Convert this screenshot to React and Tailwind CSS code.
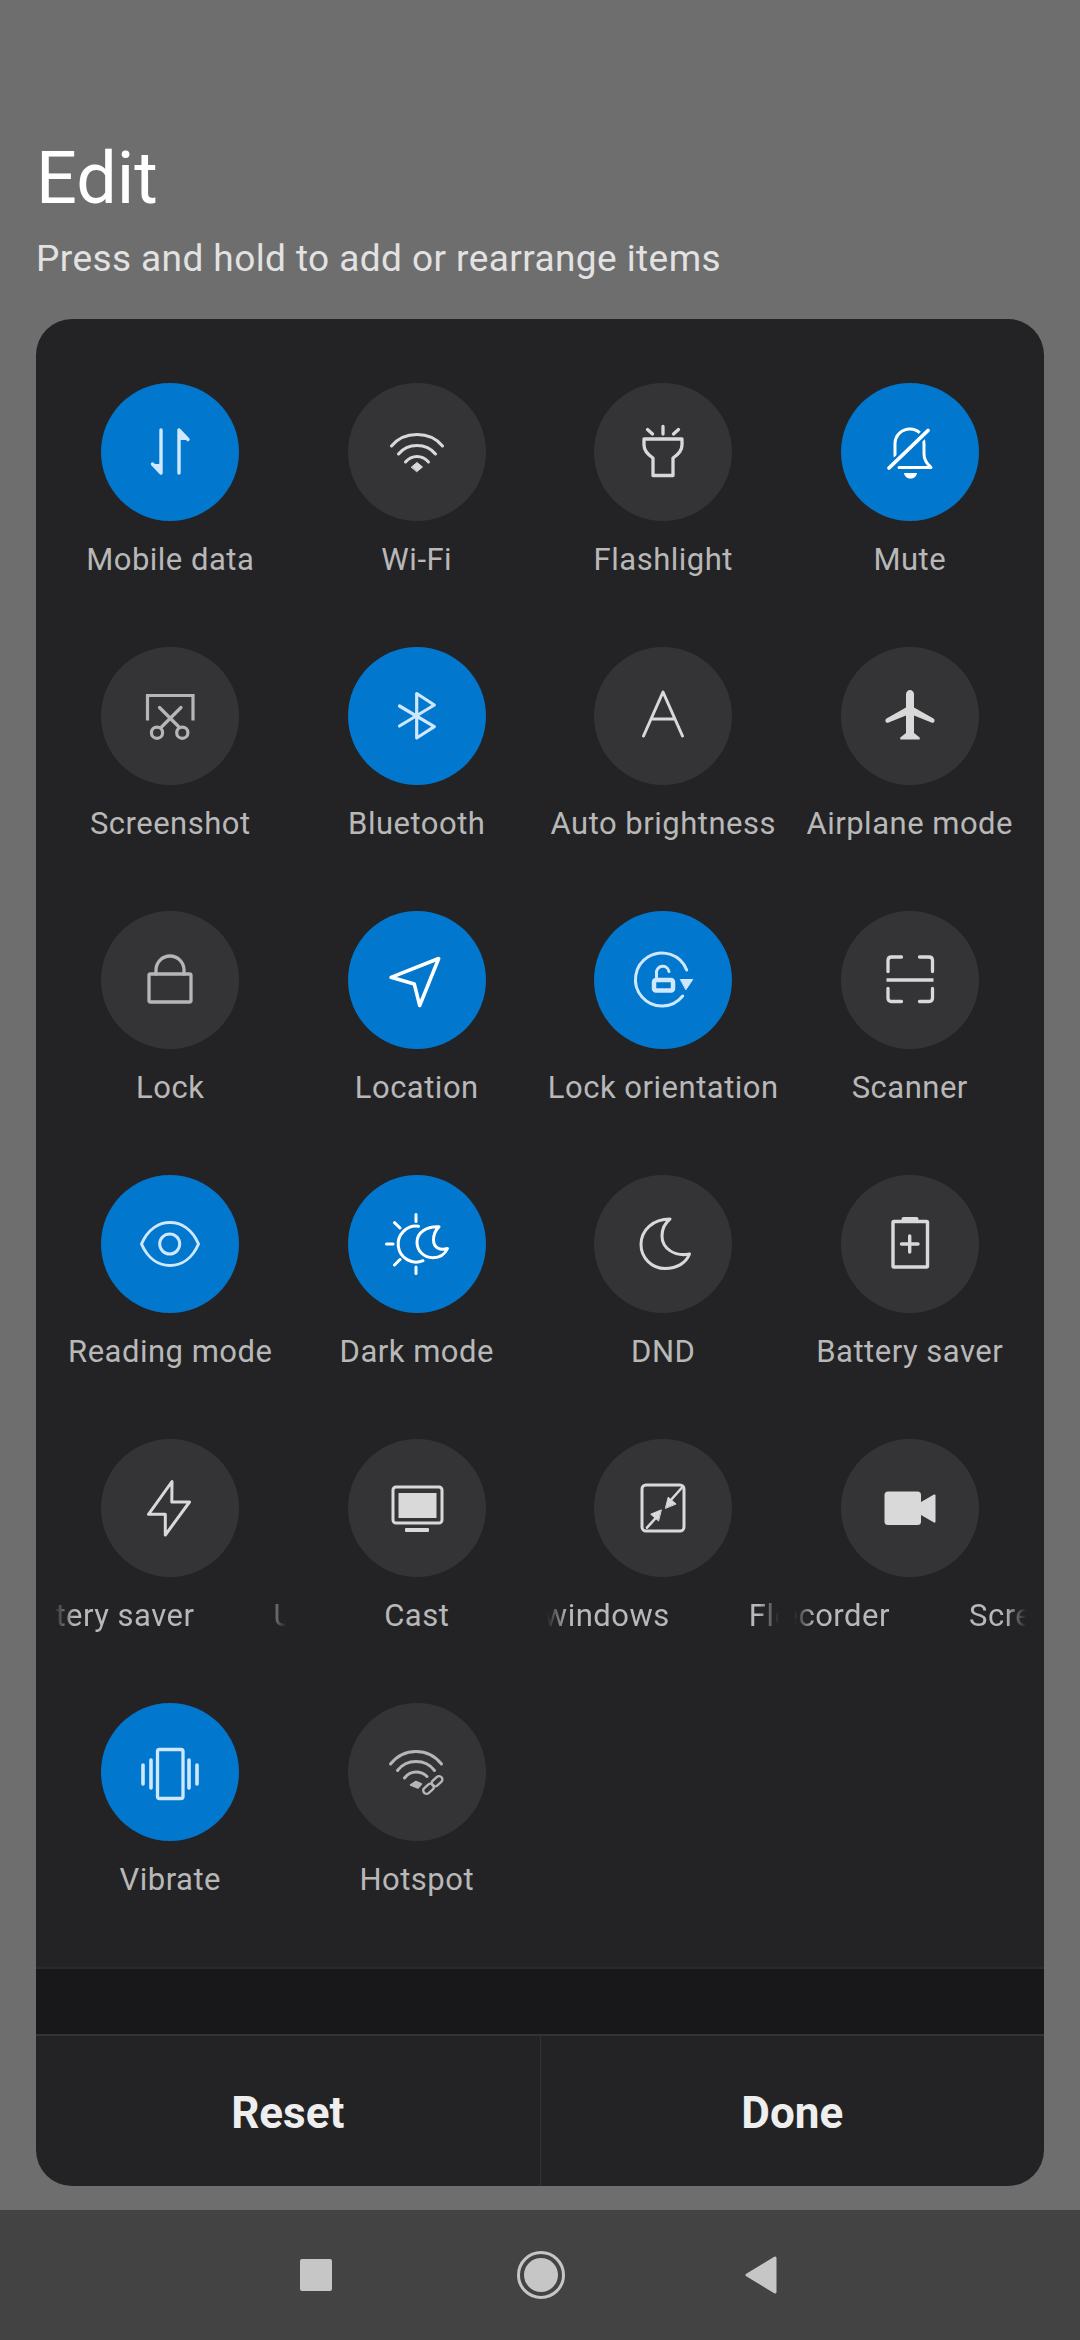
import React from "react";

const LIGHT = "#cfe8ff";
const WHITE = "#ffffff";
const G1 = "#d9d9d9";
const G2 = "#b6b6b6";

function Ico({ c, w = 3.2, children }) {
  return (
    <svg width="138" height="138" viewBox="0 0 138 138" fill="none" stroke={c} strokeWidth={w} strokeLinecap="round" strokeLinejoin="round">
      {children}
    </svg>
  );
}

const icons = {
  data: (
    <Ico c={LIGHT} w={3.4}>
      <path d="M60 91L51 81H60Z" fill={LIGHT} strokeWidth="0" />
      <path d="M60 47V90M60 90L51.5 81" />
      <path d="M78 47L87 57H78Z" fill={LIGHT} strokeWidth="0" />
      <path d="M78 90V47M78 47L87 56.5" />
    </Ico>
  ),
  wifi: (
    <Ico c={G1} w={3}>
      <path d="M43.5 63C50 55 59 51.5 69 51.5C79 51.5 88 55 94.5 63" />
      <path d="M50.5 71C55 65.5 61.5 62.5 69 62.5C76.5 62.5 83 65.5 87.5 71" />
      <path d="M57.5 79C60.5 75.5 64.5 73.5 69 73.5C73.5 73.5 77.5 75.5 80.5 79" />
      <path d="M63.5 84L69 79.5L74.5 84L69 88.5Z" fill={G1} strokeWidth="1" />
    </Ico>
  ),
  flash: (
    <Ico c={G1} w={3.3}>
      <path d="M69 43.5V51M53.5 46.5L58.5 51M84.5 46.5L79.5 51" />
      <path d="M50 56H88V62C88 67 85 71 79 75V92.5H59V75C53 71 50 67 50 62Z" />
    </Ico>
  ),
  mute: (
    <Ico c={WHITE} w={3}>
      <path d="M54 73V61C54 52 61 46 69 46C77 46 83 52 83 61V71C83 77 86 81 90 84.5H58" />
      <path d="M63 90H76C75.5 93.5 73 95.5 69.5 95.5C66 95.5 63.5 93.5 63 90Z" fill={WHITE} strokeWidth="0" />
      <path d="M87 47.5L48 85" stroke="#0277ce" strokeWidth="8" strokeLinecap="butt" />
      <path d="M87 47.5L48 85" strokeWidth="3.8" />
    </Ico>
  ),
  shot: (
    <Ico c={G2} w={3.2}>
      <path d="M46.5 73.5V48.5H92V73.5" strokeLinecap="butt" strokeLinejoin="miter" />
      <path d="M58.5 60.5L78 80M80 60.5L60.5 80" />
      <circle cx="56" cy="85.7" r="5.6" />
      <circle cx="81.3" cy="85.7" r="5.6" />
    </Ico>
  ),
  bt: (
    <Ico c={LIGHT} w={3.2}>
      <path d="M51.5 59L86.3 79.7L68.7 91V46.5L86.3 58L51.5 79" />
    </Ico>
  ),
  auto: (
    <Ico c={G1} w={3}>
      <path d="M49.5 89L69 45L88.5 89M57 72H81" />
    </Ico>
  ),
  plane: (
    <svg width="138" height="138" viewBox="0 0 138 138" fill={G1}>
      <path d="M65 47.5C65 41.5 73 41.5 73 47.5V60.5L92.5 71.5C94.5 73 93.5 76.5 91 75.7L73 68.5V86L78.7 90.5V92.5H59.3V90.5L65 86V68.5L47 75.7C44.5 76.5 43.5 73 45.5 71.5L65 60.5Z" />
    </svg>
  ),
  lock: (
    <Ico c={G2} w={3.3}>
      <rect x="48" y="63" width="42" height="28" rx="1.5" />
      <path d="M55 63V59A14 14 0 0 1 83 59V63" />
    </Ico>
  ),
  loc: (
    <Ico c={WHITE} w={3.5}>
      <path d="M90.7 47.5L43 66.3L66.3 73L71.7 94.5Z" />
    </Ico>
  ),
  orient: (
    <Ico c={LIGHT} w={3}>
      <path d="M88.7 85A26.5 26.5 0 1 1 92.7 59" />
      <path d="M86.7 68.5H98.7L92 78.5Z" fill={LIGHT} strokeWidth="1" />
      <rect x="60" y="69" width="19" height="10.5" rx="2" strokeWidth="4.5" />
      <path d="M62.5 66V62.5A6.3 6.3 0 0 1 75 60.5" strokeWidth="3" />
    </Ico>
  ),
  scan: (
    <Ico c={G1} w={3.3}>
      <path d="M47 60.5V49.5Q47 46 50.5 46H60.5M78.5 46H88Q91.5 46 91.5 49.5V60.5M47 77.5V87Q47 90.5 50.5 90.5H60.5M78.5 90.5H88Q91.5 90.5 91.5 87V77.5" />
      <path d="M45.5 69H92.5" strokeLinecap="butt" />
    </Ico>
  ),
  eye: (
    <Ico c={LIGHT} w={3}>
      <path d="M40.5 69C47 54 58 47.5 69 47.5C80 47.5 91 54 97.5 69C91 84 80 90.5 69 90.5C58 90.5 47 84 40.5 69Z" />
      <circle cx="68.7" cy="69" r="10" />
    </Ico>
  ),
  dark: (
    <Ico c={WHITE} w={3}>
      <path d="M70.5 51.2A18 18 0 1 0 75 85.7" />
      <path d="M68 39.5V46.5M68 92V98.5M38.5 69H45M46.5 47.7L52 53M46.5 90L52 84.5" />
      <path d="M91 51.8C79 51 69 57.5 69 67C69 76 76 82.7 85 82.7C91.5 82.7 97 79 99.5 73.5C92 76 85.5 72.5 85.5 65C85.5 60 87.5 55 91 51.8Z" />
    </Ico>
  ),
  dnd: (
    <Ico c={G1} w={3}>
      <path d="M76 44C59 44 47 55 47 69.5C47 83 58 93.5 71 93.5C83 93.5 92 88 95.5 79C80 82 68 73 68 61C68 54 71 48 76 44Z" />
    </Ico>
  ),
  batt: (
    <Ico c={G1} w={3.4}>
      <rect x="52" y="46.5" width="34.5" height="45.5" rx="1" />
      <path d="M62.5 44H75.5" strokeWidth="4" />
      <path d="M68.7 61V77M60.5 69H77" />
    </Ico>
  ),
  bolt: (
    <Ico c={G1} w={3}>
      <path d="M71 42.5L47.5 75.3H64.3V96L88.5 63H70.8Z" />
    </Ico>
  ),
  cast: (
    <Ico c={G1} w={3}>
      <rect x="45" y="48" width="49" height="36" rx="3" />
      <rect x="50.5" y="54" width="38" height="25" fill={G1} strokeWidth="0" />
      <rect x="57" y="89" width="24" height="4" rx="1" fill={G1} strokeWidth="0" />
    </Ico>
  ),
  float: (
    <Ico c={G1} w={3}>
      <rect x="48" y="46" width="42" height="46" rx="4" />
      <path d="M88.5 48L76 62M53 88.7L63.5 77" strokeWidth="2.6" />
      <path d="M71.5 69L74.2 58.2L81.8 64.8Z" fill={G1} strokeWidth="1" />
      <path d="M67 71L56.7 75.2L64.3 81.8Z" fill={G1} strokeWidth="1" />
    </Ico>
  ),
  cam: (
    <svg width="138" height="138" viewBox="0 0 138 138" fill={G1}>
      <rect x="43.5" y="52.5" width="36.5" height="33.5" rx="3.5" />
      <path d="M80 63L93 55.5Q94.5 55 94.5 56.5V82.5Q94.5 84 93 83.5L80 76Z" />
    </svg>
  ),
  vib: (
    <Ico c={LIGHT} w={3.3}>
      <rect x="56.5" y="46.5" width="25.5" height="49" rx="2" />
      <path d="M50 57V85M42 62V81M88 57V85M96 62V81" strokeWidth="3.6" />
    </Ico>
  ),
  hot: (
    <Ico c={G2} w={3}>
      <path d="M42.5 61C49 53 58 48.5 68 48.5C78 48.5 87 53 93.5 61" />
      <path d="M49.5 67.5C54 61.5 60.5 58.5 68 58.5C75.5 58.5 82 61.5 86.5 67.5" />
      <path d="M56.5 75C59.5 71 63.5 69 68 69C72 69 76 70.5 79 73.5" />
      <path d="M62.5 82L68 78.5L73.5 81L70 85Z" fill={G2} strokeWidth="1.5" />
      <g strokeWidth="2.4">
        <rect x="74.5" y="82.5" width="12" height="6.5" rx="3.2" transform="rotate(-42 80.5 85.7)" />
        <rect x="83" y="75" width="12" height="6.5" rx="3.2" transform="rotate(-42 89 78.2)" />
      </g>
    </Ico>
  ),
};

function Cell({ icon, on, label, marquee }) {
  return (
    <div className="flex flex-col items-center">
      <div className={`h-[138px] w-[138px] shrink-0 rounded-full ${on ? "bg-[#0277ce]" : "bg-[#343436]"}`}>{icons[icon]}</div>
      {marquee ? (
        marquee
      ) : (
        <div className="mt-[21px] h-[36px] whitespace-nowrap text-[31px] leading-[36px] tracking-[0.5px] text-[#b8b8b8]">{label}</div>
      )}
    </div>
  );
}

function Fade({ text, className }) {
  return (
    <div className="mt-[21px] h-[36px] w-[232px] overflow-hidden text-[31px] leading-[36px] tracking-[0.5px] text-[#b8b8b8] [mask-image:linear-gradient(to_right,transparent,black_20px,black_212px,transparent)]">
      <div className={`flex w-max gap-[79px] whitespace-nowrap ${className}`}>
        <span>{text}</span>
        <span>{text}</span>
      </div>
    </div>
  );
}

export default function App() {
  return (
    <div className="flex h-[2340px] w-[1080px] flex-col overflow-hidden bg-[#6e6e6e] font-['Roboto',sans-serif]">
      <div className="flex flex-1 flex-col px-[36px] pt-[137px]">
        <div className="text-[72px] leading-[84px] font-normal text-white">Edit</div>
        <div className="mt-[16px] text-[37px] leading-[44px] tracking-[0.42px] text-[#e2e2e2]">Press and hold to add or rearrange items</div>
        <div className="mt-[38px] flex h-[1867px] flex-col overflow-hidden rounded-[36px] bg-[#232325]">
          <div className="grid grid-cols-4 auto-rows-[264px] px-[11px] pt-[64px]">
            <Cell icon="data" on label="Mobile data" />
            <Cell icon="wifi" label="Wi-Fi" />
            <Cell icon="flash" label="Flashlight" />
            <Cell icon="mute" on label="Mute" />
            <Cell icon="shot" label="Screenshot" />
            <Cell icon="bt" on label="Bluetooth" />
            <Cell icon="auto" label="Auto brightness" />
            <Cell icon="plane" label="Airplane mode" />
            <Cell icon="lock" label="Lock" />
            <Cell icon="loc" on label="Location" />
            <Cell icon="orient" on label="Lock orientation" />
            <Cell icon="scan" label="Scanner" />
            <Cell icon="eye" on label="Reading mode" />
            <Cell icon="dark" on label="Dark mode" />
            <Cell icon="dnd" label="DND" />
            <Cell icon="batt" label="Battery saver" />
            <Cell icon="bolt" marquee={<Fade text="Ultra battery saver" className="-ml-[120px]" />} />
            <Cell icon="cast" label="Cast" />
            <Cell icon="float" marquee={<Fade text="Floating windows" className="-ml-[127px]" />} />
            <Cell icon="cam" marquee={<Fade text="Screen recorder" className="-ml-[129px]" />} />
            <Cell icon="vib" on label="Vibrate" />
            <Cell icon="hot" label="Hotspot" />
          </div>
          <div className="h-[67px] border-t-2 border-[#2a2a2c] bg-[#18181a]" />
          <div className="flex flex-1 border-t-2 border-[#343436]">
            <div className="flex flex-1 items-center justify-center border-r border-[#333335] pt-[3px] text-[44px] font-bold text-[#eeeeee]">Reset</div>
            <div className="flex flex-1 items-center justify-center pt-[3px] text-[44px] font-bold text-[#eeeeee]">Done</div>
          </div>
        </div>
      </div>
      <div className="flex h-[130px] items-center bg-[#434343] pl-[300px]">
        <div className="h-[32px] w-[32px] rounded-[2px] bg-[#c6c6c6]" />
        <div className="ml-[185px] flex h-[48px] w-[48px] items-center justify-center rounded-full border-[3px] border-[#c6c6c6]">
          <div className="h-[34px] w-[34px] rounded-full bg-[#c6c6c6]" />
        </div>
        <svg className="ml-[180px]" width="32" height="38" viewBox="0 0 32 38" fill="#c6c6c6" stroke="#c6c6c6" strokeWidth="3" strokeLinejoin="round">
          <path d="M30 2V36L2 19Z" />
        </svg>
      </div>
    </div>
  );
}
